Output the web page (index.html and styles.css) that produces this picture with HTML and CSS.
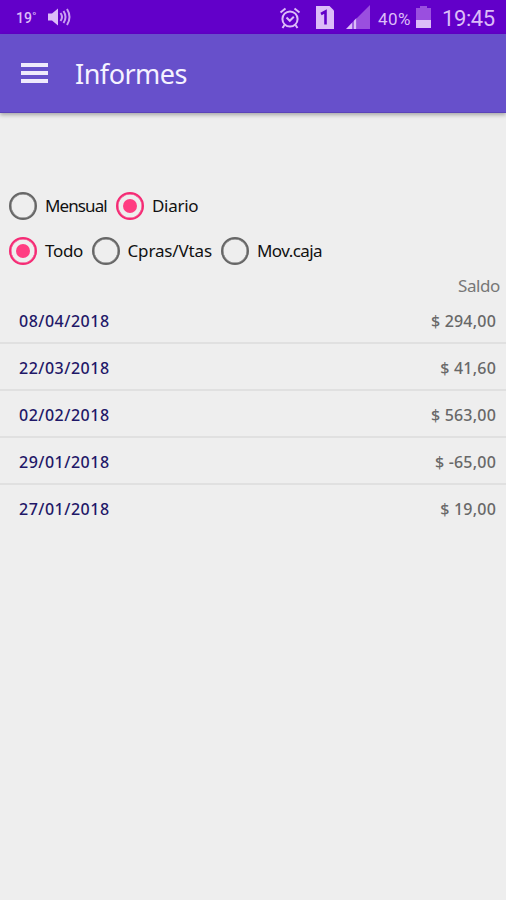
FILE: index.html
```
<!DOCTYPE html>
<html lang="es">
<head>
    <meta charset="UTF-8">
    <meta name="viewport" content="width=device-width, initial-scale=1.0">
    <title>Informes</title>
    <link rel="stylesheet" href="styles.css">
</head>
<body>

    <div class="estado">
        <span class="temperatura">19˚</span>
        <svg class="volumen" width="24" height="20" viewBox="0 0 24 20">
            <path d="M0 6.500h4l6-5v17l-6-5H0z" fill="#dcbcf8"/>
            <path d="M12.500 6q3 4 0 8M15.500 4q4 6 0 12M19 2q5 8 0 16" fill="none" stroke="#c9a0f0" stroke-width="2"/>
        </svg>
        <svg class="alarma" width="22" height="22" viewBox="0 0 22 22">
            <g fill="none" stroke="#dcbcf8" stroke-width="2">
                <circle cx="11" cy="12" r="7.600"/>
                <path d="M1.500 5.500l5-4M20.500 5.500l-5-4M5.500 18l-2 3M16.500 18l2 3"/>
                <path d="M7.500 10.500l3.300 3.300 4-4"/>
            </g>
        </svg>
        <svg class="sim" width="18" height="23" viewBox="0 0 18 23">
            <path d="M0 0h13.500L18 4.500V23H0z" fill="#dcbcf8"/>
            <path d="M5 8L9.500 5.500V18.500" fill="none" stroke="#6200c9" stroke-width="2.600"/>
        </svg>
        <svg class="cobertura" width="24" height="24" viewBox="0 0 24 24">
            <path d="M11 13L24 0v24H11z" fill="#9a4fdf"/>
            <path d="M0 24l10.500-11V24z" fill="#dcbcf8"/>
            <path d="M7 16v8" stroke="#6200c9" stroke-width="1"/>
        </svg>
        <span class="porcentaje">40%</span>
        <svg class="bateria" width="15" height="22" viewBox="0 0 15 22">
            <path d="M0 2h4V0h7v2h4v12H0z" fill="#9a4fdf"/>
            <path d="M0 14h15v8H0z" fill="#dcbcf8"/>
        </svg>
        <span class="hora">19:45</span>
    </div>

    <div class="barra">
        <div class="menu"><i></i><i></i><i></i></div>
        <h1>Informes</h1>
    </div>

    <div class="filtros">
        <div class="grupo">
            <div class="opcion mensual"><span class="radio"></span><span>Mensual</span></div>
            <div class="opcion diario"><span class="radio activo"></span><span>Diario</span></div>
        </div>
        <div class="grupo">
            <div class="opcion todo"><span class="radio activo"></span><span>Todo</span></div>
            <div class="opcion compras"><span class="radio"></span><span>Cpras/Vtas</span></div>
            <div class="opcion caja"><span class="radio"></span><span>Mov.caja</span></div>
        </div>
    </div>

    <div class="titulo"><span>Saldo</span></div>

    <div class="lista">
        <div class="fila"><span class="fecha">08/04/2018</span><span class="monto">$ 294,00</span></div>
        <div class="fila"><span class="fecha">22/03/2018</span><span class="monto">$ 41,60</span></div>
        <div class="fila"><span class="fecha">02/02/2018</span><span class="monto">$ 563,00</span></div>
        <div class="fila"><span class="fecha">29/01/2018</span><span class="monto">$ -65,00</span></div>
        <div class="fila"><span class="fecha">27/01/2018</span><span class="monto">$ 19,00</span></div>
    </div>

</body>
</html>
```
FILE: styles.css
```
body {
    font-family: "Noto Sans", sans-serif;
    background-color: #eeeeee;
    margin: 0;
    min-height: 100vh;
}

span {
    white-space: nowrap;
}

svg {
    display: block;
    flex: none;
}

.estado {
    display: flex;
    align-items: center;
    height: 34px;
    box-sizing: border-box;
    padding: 0 11px 0 16px;
    background-color: #6200c9;
    color: #dcbcf8;
    font-family: Roboto, sans-serif;
}

.temperatura {
    width: 32px;
    margin-top: 2px;
    font-size: 14px;
    font-weight: 500;
}

.alarma {
    margin-left: auto;
    margin-top: 2px;
}

.sim {
    margin-left: 15px;
}

.cobertura {
    margin-left: 12px;
}

.porcentaje {
    width: 38px;
    margin-left: 8px;
    margin-top: 3px;
    font-size: 17px;
    letter-spacing: 0.4px;
}

.bateria {
    margin-top: -1px;
}

.hora {
    width: 53px;
    margin-left: 11px;
    margin-top: 3px;
    font-size: 22px;
    letter-spacing: -0.4px;
}

.barra {
    display: flex;
    align-items: center;
    height: 79px;
    padding-left: 21px;
    background-color: #6750cb;
    box-shadow: inset 0 -1px #5a43b8, 0 2px 4px rgba(0, 0, 0, 0.3);
}

.menu {
    display: flex;
    flex-direction: column;
    gap: 4px;
    width: 27px;
    margin-top: -2px;
}

.menu i {
    height: 4px;
    background-color: #efeafc;
}

h1 {
    margin: 0 0 0 27px;
    color: #f5f2ff;
    font-size: 27px;
    font-weight: 400;
    letter-spacing: -0.5px;
}

.filtros {
    padding: 70px 9px 0;
}

.grupo {
    display: flex;
    height: 45px;
}

.opcion {
    display: flex;
    align-items: center;
    gap: 8px;
    color: #111111;
    font-size: 17px;
    letter-spacing: -0.3px;
}

.mensual {
    width: 107px;
    letter-spacing: -0.9px;
}

.todo {
    width: 82.5px;
}

.compras {
    width: 129.5px;
    letter-spacing: -0.15px;
}

.caja {
    letter-spacing: -0.55px;
}

.radio {
    display: flex;
    align-items: center;
    justify-content: center;
    flex: none;
    width: 28px;
    height: 28px;
    box-sizing: border-box;
    border: 2px solid #666666;
    border-radius: 50%;
    box-shadow: inset 0 0 0 0.5px #666666;
}

.activo {
    border-color: #f52a74;
    box-shadow: inset 0 0 0 0.5px #f52a74;
}

.activo::before {
    content: "";
    width: 14px;
    height: 14px;
    border-radius: 50%;
    background-color: #ff3d82;
}

.titulo {
    display: flex;
    justify-content: flex-end;
    align-items: center;
    height: 24px;
    padding-right: 6px;
    color: #777777;
    font-size: 17px;
    letter-spacing: -0.4px;
}

.fila {
    display: flex;
    justify-content: space-between;
    align-items: center;
    height: 47px;
    box-sizing: border-box;
    padding: 2px 10px 0 19px;
    border-bottom: 2px solid #e0e0e0;
}

.fila:last-child {
    border-bottom-color: transparent;
}

.fecha {
    color: #1f1868;
    font-size: 16px;
    font-weight: 500;
    letter-spacing: 0.5px;
}

.monto {
    color: #686868;
    font-size: 16px;
    font-weight: 500;
    letter-spacing: 0.2px;
}
```
